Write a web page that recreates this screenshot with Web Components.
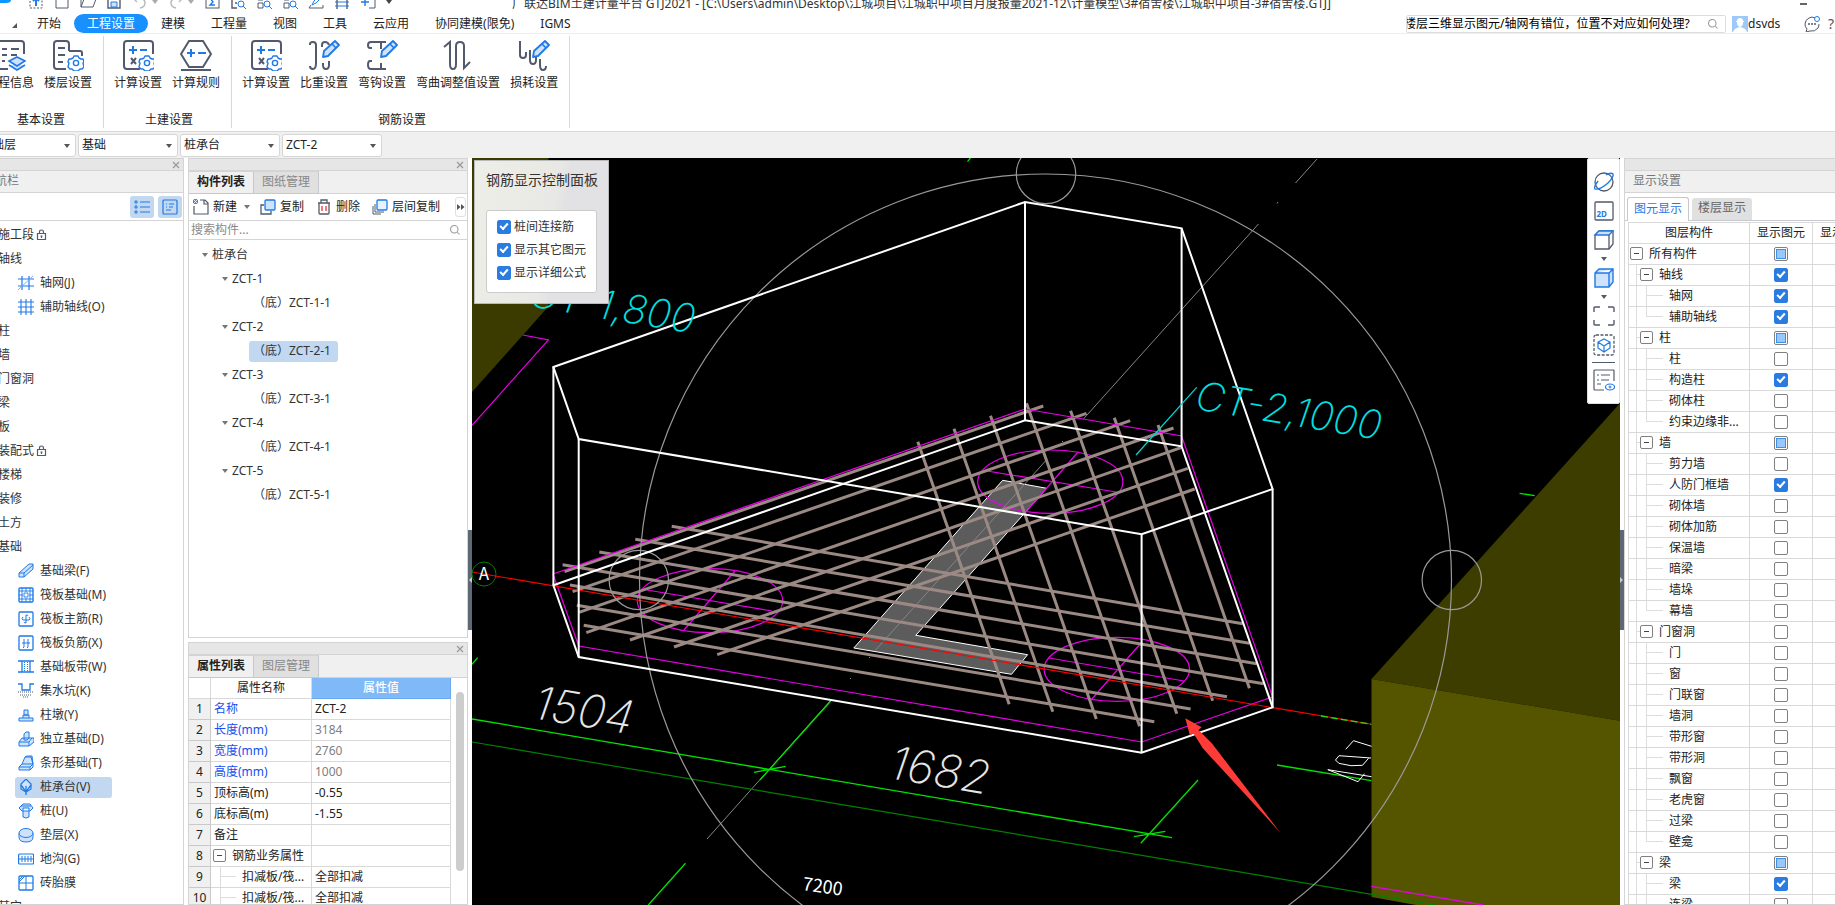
<!DOCTYPE html>
<html lang="zh-CN">
<head>
<meta charset="utf-8">
<title>广联达BIM土建计量平台 GTJ2021</title>
<style>
html,body{margin:0;height:100%}
body{font:12px/20px "Noto Sans","Noto Sans CJK SC",sans-serif;color:#222;background:#fff;overflow:hidden}
</style>
</head>
<body>
<gtj-app></gtj-app>
<script>
const K='stroke="#535a6b" fill="none"', B='stroke="#1f7ae6" fill="none"', L='stroke="#1f7ae6" fill="#cfe2fb"';
const gear=(x,y)=>`<g ${B} stroke-width="2"><path d="M${x-2} ${y-7}h4l1 2 2 1 2 0 1 3-1 1 1 4-2 2-2 0-2 2h-4l-2-2-2 0-2-2 1-4-1-1 1-3 2 0 2-1z" stroke-linejoin="round" stroke-width="1.4"/><circle cx="${x}" cy="${y}" r="2.6" stroke-width="1.4"/></g>`;
const pencil=`<path d="M15 18l1-6L27 2l4 4-11 11z" ${L} stroke-width="1.8" stroke-linejoin="round"/><path d="M24 5l4 4" ${B} stroke-width="1.6"/>`;
const ICONS={
 info:[32,`<g ${K} stroke-width="2"><path d="M6 2h21q3 0 3 3v10M4 30h10M8 10h5M8 16h5M8 22h3M17 10h8M17 16h6"/></g><path d="M23 18l8 4-8 5-8-5zM15 26l8 5 8-5" ${L} stroke-width="1.6"/>`],
 floor:[32,`<g ${K} stroke-width="2"><path d="M17 12V5q0-3-3-3H5Q2 2 2 5v22q0 3 3 3h9M6 9h7M6 16h7M6 23h5M17 12h11q2 0 2 2v3"/></g>${gear(24,24)}`],
 calc:[32,`<g ${K} stroke-width="2"><path d="M31 15V5q0-3-3-3H5Q2 2 2 5v22q0 3 3 3h13M9 19l5 6M14 19l-5 6"/></g><path d="M7 11h8M11 7v8M18 11h7" ${B} stroke-width="2"/>${gear(25,24)}`],
 rule:[32,`<g ${K} stroke-width="2"><path d="M9 2h14l8 13-8 13H9L1 15zM1 31h30"/></g><path d="M7 14h8M11 10v8M18 14h8" ${B} stroke-width="2"/>`],
 weight:[32,`<g ${K} stroke-width="2"><path d="M2 6V5q0-2 3-2t3 3v18q0 6-3 6t-3-3M14 8V6q0-3 3-3t4 3M15 24v2q0 4 3 4t3-4v-4"/></g>${pencil}`],
 hook:[32,`<g ${K} stroke-width="2"><path d="M6 9H4Q2 9 2 6t3-3h15M15 3v7M6 22H4q-2 0-2 4t3 4h15M15 24v6M9 3h4"/></g>${pencil}`],
 bend:[32,`<g ${K} stroke-width="2"><path d="M2 8l6-5v22q0 5 3 5t3-5V7q0-4 4-4t4 4v22l6-6"/></g>`],
 loss:[32,`<g ${K} stroke-width="2"><path d="M2 2v14q0 3 3 3t3-3v-3M12 11v10q0 4 3 4t3-4v-3M22 20v6q0 5 3 5t3-4"/></g>${pencil}`],
 t0:[16,`<rect x="2" y="1" width="12" height="13" ${K} stroke-dasharray="2 1.5"/><path d="M8 12V5M5 7l3-3 3 3" ${B} stroke-width="2"/>`],
 t1:[16,`<path d="M2 1h9l3 3v10H2z" ${K}/>`],
 t2:[16,`<path d="M1 13V2h12v3M1 13L4 5h12l-3 8z" ${K}/>`],
 t3:[16,`<path d="M2 1h12v13H2z" ${K} stroke-width="1.4"/><path d="M5 8h6v5H5z" ${L}/>`],
 t4:[16,`<path d="M2 5l3-3M2 5l3 3M2 5h7q4 0 4 4t-5 5" stroke="#b5b8be" fill="none" stroke-width="1.4"/>`],
 t5:[16,`<path d="M14 5l-3-3M14 5l-3 3M14 5H7Q3 5 3 9t5 5" stroke="#b5b8be" fill="none" stroke-width="1.4"/>`],
 t6:[16,`<rect x="2" y="1" width="13" height="13" ${K}/><path d="M11 4H6l3 4-3 3h5" ${B} stroke-width="1.4"/>`],
 t7:[16,`<path d="M14 5V1H2v13h5M5 5h3M5 9h2" ${K} stroke-width="1.4"/><circle cx="11" cy="10" r="3" ${B}/><path d="M13 12l3 3" ${B}/>`],
 t8:[16,`<path d="M2 1h5v5H2zM2 9h5v5H2zM10 1h5v4" ${K}/><circle cx="11" cy="10" r="3" ${B}/><path d="M13 12l3 3" ${B}/>`],
 t9:[16,`<path d="M4 11l2-4 6-6 2 2-6 6z" ${B}/><path d="M1 14h14v-3M1 14l2-3" ${K}/>`],
 t10:[16,`<path d="M3 1v14M13 1v14" ${K} stroke-width="1.4"/><path d="M1 4h14M1 8h14M1 12h14" ${B}/>`],
 t11:[16,`<path d="M9 2h6v12H9" ${K}/><path d="M1 8h8M5 4v8" ${B} stroke-width="1.4"/>`],
 search:[16,`<circle cx="7" cy="7" r="5" stroke="#999" fill="none" stroke-width="1.4"/><path d="M11 11l3 3" stroke="#999" stroke-width="1.4"/>`],
 avatar:[16,`<path d="M0 0h16v16H0z" fill="#9cc9f7"/><path d="M5 5q0-3 3-3t3 3v2q0 3-3 4-3-1-3-4zM1 16q1-4 7-5 6 1 7 5zM4 5h8v1H4z" fill="#fff"/>`],
 chat:[16,`<path d="M11 2Q8 0 5 2 1 4 1 8q0 3 2 5l-1 3 4-1q5 1 8-3 1-2 1-4" ${K}/><circle cx="13" cy="3" r="2.5" ${B}/><path d="M4 8h2M7 8h2M10 8h2" ${K} stroke-width="1.6"/>`],
 list:[16,`<path d="M6 3h10M6 8h10M6 13h10" ${B} stroke-width="1.2"/><path d="M1 2h2v2H1zM1 7h2v2H1zM1 12h2v2H1z" ${B}/>`],
 card:[16,`<rect x="1" y="1" width="14" height="14" rx="1" ${B} stroke-width="1.2"/><path d="M4 5h1M7 5h5M4 8h1M7 8h4M4 11h5" ${B}/>`],
 lock:[12,`<path d="M1.500 4.500h8v6h-8zM3.500 4.500V3q0-2 2-2t2 2v1.500M5.500 6.500v2.500M4.500 7h2" ${K} stroke-width="1.200"/>`],
 grid1:[16,`<path d="M0 4h16M0 11h16M4 1v14M11 1v14" ${B} stroke-width="1.2"/><path d="M0 15L15 1" stroke="#7aaef0"/>`],
 grid2:[16,`<path d="M0 3h16M0 8h16M0 13h16M3 0v16M8 0v16M13 0v16" ${B} stroke-width="1.1"/>`],
 beam:[16,`<path d="M1 10L11 1h4v5L6 14H1zM1 10h5v4M6 10l9-8" ${L}/>`],
 raft:[16,`<rect x="1" y="1" width="14" height="14" rx="1" ${B} stroke-width="1.4"/><path d="M1 4h14M1 8h4M11 8h4M1 12h14M4 1v14M8 1v4M8 11v4M12 1v14M6 6h4v4H6z" ${B} stroke-width=".9"/>`],
 main:[16,`<rect x="1" y="1" width="14" height="14" rx="1" ${B} stroke-width="1.3"/><path d="M5 6q-2 2 0 3h6q2-1 0-3M8 4v8M8 4q2 0 2 1M8 12q-2 0-2-1" ${B}/>`],
 neg:[16,`<rect x="1" y="1" width="14" height="14" rx="1" ${B} stroke-width="1.3"/><path d="M4 8h8M6 4v8l-1 1M10 4v8l-1 1" ${B}/>`],
 strip:[16,`<path d="M0 2h16M0 13h16M4 2v11M12 2v11" ${B} stroke-width="1.3"/><path d="M6.500 3v10M9.500 3v10" ${B} stroke-dasharray="1 1"/>`],
 sump:[16,`<path d="M0 1h4v6h8V1h4" ${B} stroke-width="1.3"/><path d="M0 9h16M2 12h12M5 14h6" ${K} stroke-dasharray="1 1"/>`],
 pier:[16,`<path d="M1 11h14v3H1zM5 11V8h6v3M6 8V3h4v5z" ${L}/>`],
 iso:[16,`<path d="M1 11h10v4H1zM1 11l3-4h10l-3 4M14 7l2 0v4l-5 4M6 8V3l2-2h3v6l-2 2H6z" ${L}/>`],
 bar:[16,`<path d="M1 12h11v3H1zM1 12l3-3h11l-3 3M15 9v3l-3 3M4 9l3-7h6l2 7M7 2l2-1h5l1 8" ${L}/>`],
 cap:[16,`<path d="M8 0l5 5v5l-5 3-5-3V5z" ${L} stroke-width="1.200"/><path d="M3 6l5 7 5-7M8 7v9" ${B} stroke-width="1.300"/>`],
 pile:[16,`<path d="M1 5l4-4h7l3 4-3 3H4zM5 5v9l3 1 3-1V5zM3 3h10" ${L}/>`],
 pad:[16,`<path d="M1 6v4q0 5 7 5t7-5V6" ${L}/><ellipse cx="8" cy="6" rx="7" ry="4.500" ${L}/>`],
 trench:[16,`<rect x="0.600" y="3" width="15" height="10" rx="1" ${B} stroke-width="1.2"/><path d="M1 8h15M4 5v6M7 5v6M10 5v6M13 5v6" ${B}/>`],
 brick:[16,`<rect x="1" y="1" width="14" height="14" rx="1" ${B} stroke-width="1.3"/><path d="M8 1v14M1 8h14M1 7l6-6M1 5l4-4" ${B}/>`],
 add:[16,`<path d="M7 1h5l3 3v11H1V7M11 1v4h4" ${K} stroke-width="1.2"/><path d="M0 0h5v5H0z" fill="#3d8bea"/><path d="M0 0l5 5M5 0L0 5" stroke="#fff" stroke-width=".8"/>`],
 copy:[16,`<path d="M4 6H1v9h10v-3" ${K} stroke-width="1.3"/><rect x="5" y="1" width="10" height="10" rx="1" ${L} stroke-width="1.3"/>`],
 del:[16,`<path d="M2 4h12M3 4v10q0 1 1 1h8q1 0 1-1V4M5 4V1h6v3" ${K} stroke-width="1.3"/><path d="M6 7v5M10 7v5" stroke="#e33" stroke-width="1.3"/>`],
 copies:[16,`<path d="M1 7v8h8M3 5v8h9" ${K}/><rect x="5" y="1" width="10" height="10" rx="1" fill="#e8f1fd" stroke="#1f7ae6" stroke-width="1.300"/>`],
 orbit:[22,`<circle cx="11" cy="11" r="9" ${K} stroke-width="1.300"/><path d="M5 10Q0 17 2 18q5 1 13-6 6-6 5-9-2-2-7 1" ${B} stroke-width="1.400"/>`],
 two:[22,`<rect x="2" y="2" width="18" height="18" rx="1" ${K} stroke-width="1.300"/>`],
 box:[22,`<path d="M2 6l4-4h14v13l-4 5H2z" ${K} stroke-width="1.300"/><path d="M2 6l4-4h14l-4 4z" ${L} stroke-width="1.300"/><path d="M16 6v14" ${K} stroke-width="1.300"/>`],
 boxf:[22,`<path d="M2 6l4-4h14v13l-4 5H2zM2 6h14l4-4M16 6v14" ${L} stroke-width="1.400"/>`],
 fit:[22,`<path d="M1 7V3q0-1 1-1h5M15 2h5q1 0 1 1v4M21 15v4q0 1-1 1h-5M7 20H2q-1 0-1-1v-4" ${K} stroke-width="1.400"/>`],
 sel:[22,`<rect x="1" y="1" width="20" height="20" rx="2" ${K} stroke-width="1.300" stroke-dasharray="3 1.500"/><path d="M11 5l6 3v6l-6 4-6-4V8zM5 8l6 4 6-4M11 12v6" ${B} stroke-width="1.200"/>`],
 look:[22,`<path d="M21 12V2q0-1-1-1H2Q1 1 1 2v18q0 1 1 1h9M4 6h2M8 6h9M4 11h2M8 11h8M4 15h4" ${K} stroke-width="1.200"/><ellipse cx="17" cy="18" rx="4.500" ry="3" ${B} stroke-width="1.200"/><circle cx="17" cy="18" r="1" ${B}/>`]
};
function define(name,render,after){
  customElements.define(name,class extends HTMLElement{
    connectedCallback(){
      if(this.shadowRoot)return;
      const t=document.createElement('template');
      t.innerHTML=render(this);
      this.attachShadow({mode:'open'}).append(t.content.cloneNode(true));
      if(after)after(this.shadowRoot,this);
    }
  });
}
const A=(e,n,d='')=>e.getAttribute(n)??d;

define('ui-icon',e=>{const [v,s]=ICONS[A(e,'name')],z=A(e,'size',v);
  return `<style>:host{display:block;flex:none;width:${z}px;height:${z}px}svg{display:block}</style><svg width="${z}" height="${z}" viewBox="0 0 ${v} ${v}" aria-hidden="true">${s}</svg>`});
define('ui-caret',()=>`<style>:host{display:block;flex:none;width:0;height:0;border:3px solid transparent;border-bottom:0;border-top:4px solid var(--c,#777)}</style>`);

const checkCss=`input{appearance:none;box-sizing:border-box;width:14px;height:14px;margin:0;border:1px solid #808080;border-radius:2px;background:#fff;display:block;flex:none}
input:checked{border-color:#2a7ce0;background:linear-gradient(#2a7ce0,#2a7ce0)}
input:checked::before{content:"";display:block;width:6px;height:3px;margin:2px 0 0 2px;border:solid #fff;border-width:0 0 2px 2px;transform:rotate(-48deg)}
input:indeterminate::before{content:"";display:block;width:8px;height:8px;margin:1px;border:1px solid #3d8fec;background:#9bc8fb}`;
define('check-box',e=>`<style>:host{display:block}label{display:flex;align-items:center;gap:3px;color:#333;white-space:nowrap}${checkCss}</style><label><input type="checkbox" ${e.hasAttribute('checked')?'checked':''} aria-label="${A(e,'label','选项')}"><slot></slot></label>`,
  (r,e)=>{if(e.hasAttribute('mixed'))r.querySelector('input').indeterminate=true; if(!e.hasAttribute('label'))r.querySelector('input').removeAttribute('aria-label')});

define('title-bar',()=>`<style>:host{display:flex;height:13px;overflow:hidden;align-items:flex-end;position:relative}
.logo{flex:none;width:28px;height:13px}.tools{display:flex;gap:10px;height:16px;align-items:center;margin-bottom:3px}
button{border:0;background:none;padding:0;display:block}.pair{display:flex;align-items:center;gap:4px}
h1{font-size:12px;font-weight:400;line-height:18px;margin:0 0 0 120px;white-space:nowrap;flex:none;color:#333}
.min{margin-left:auto;margin-right:28px;width:7px;height:2px;background:#666;margin-bottom:8px;flex:none}</style>
<svg class="logo" viewBox="0 0 28 13" aria-hidden="true"><path d="M0 0h11q0 3-5 3H0z" fill="#0a97ff"/></svg>
<div class="tools">${[0,1,2,3].map(i=>`<button aria-label="工具${i}"><ui-icon name="t${i}"></ui-icon></button>`).join('')}
<span class="pair"><button aria-label="撤销"><ui-icon name="t4"></ui-icon></button><ui-caret style="--c:#aaa"></ui-caret></span><span class="pair"><button aria-label="恢复"><ui-icon name="t5"></ui-icon></button><ui-caret style="--c:#aaa"></ui-caret></span>
${[6,7,8,8,9,10,11].map(i=>`<button aria-label="工具${i}"><ui-icon name="t${i}"></ui-icon></button>`).join('')}<ui-caret style="--c:#444"></ui-caret></div>
<h1>广联达BIM土建计量平台 GTJ2021 - [C:\\Users\\admin\\Desktop\\江城项目\\江城职中项目月度报量2021-12\\计量模型\\3#宿舍楼\\江城职中项目-3#宿舍楼.GTJ]</h1><span class="min"></span>`);

define('menu-bar',()=>`<style>:host{display:flex;height:19px;align-items:center;border-bottom:1px solid #eee;white-space:nowrap;padding-bottom:0}
.corner{width:0;height:0;border:solid transparent;border-width:0 0 5px 5px;border-bottom-color:#555;margin:4px 7px 0 12px;flex:none}
nav{display:flex}button{font:inherit;border:0;background:none;padding:0 13px;height:19px;line-height:19px;color:#222;border-radius:10px}
button.on{background:#1890ff;color:#fff}
.find{display:flex;align-items:center;box-sizing:border-box;width:320px;height:18px;border:1px solid #ddd;border-radius:2px;margin-left:auto;padding-right:6px}
input{flex:1;min-width:0;border:0;padding:0;font:inherit;line-height:16px;height:16px;outline:0;color:#000;text-indent:-3px;background:none}
.user{display:flex;align-items:center;margin:0 20px 0 6px;width:52px}.q{margin-left:8px;width:8px;font-size:14px;color:#555}.q{width:7px}</style>
<span class="corner"></span><nav>${['开始','工程设置','建模','工程量','视图','工具','云应用','协同建模(限免)','IGMS'].map((t,i)=>`<button${i==1?' class="on"':''}>${t}</button>`).join('')}</nav>
<label class="find"><input aria-label="搜索问题" value="楼层三维显示图元/轴网有错位，位置不对应如何处理?"><ui-icon name="search" size="12"></ui-icon></label>
<span class="user"><ui-icon name="avatar"></ui-icon>dsvds</span><ui-icon name="chat"></ui-icon><span class="q">?</span>`);

define('ribbon-button',e=>`<style>:host{display:block}button{font:inherit;line-height:20px;color:#222;border:0;background:none;padding:0 5px;display:flex;flex-direction:column;align-items:center;gap:2px;white-space:nowrap}</style><button><ui-icon name="${A(e,'icon')}"></ui-icon><slot></slot></button>`);
define('ribbon-group',e=>`<style>:host{display:flex;flex-direction:column;justify-content:space-between;height:92px;box-sizing:border-box;border-right:1px solid #d8d8d8;padding:3px 6px 0 5px}
.row{display:flex}.cap{text-align:center;line-height:20px;margin-bottom:-2px;padding-left:4px}</style><div class="row"><slot></slot></div><div class="cap">${A(e,'caption')}</div>`);
define('ribbon-bar',()=>`<style>:host{display:flex;height:98px;box-sizing:border-box;padding-top:2px;border-bottom:1px solid #d9d9d9;margin-left:-24px}</style>
<ribbon-group caption="基本设置"><ribbon-button icon="info">工程信息</ribbon-button><ribbon-button icon="floor">楼层设置</ribbon-button></ribbon-group>
<ribbon-group caption="土建设置"><ribbon-button icon="calc">计算设置</ribbon-button><ribbon-button icon="rule">计算规则</ribbon-button></ribbon-group>
<ribbon-group caption="钢筋设置"><ribbon-button icon="calc">计算设置</ribbon-button><ribbon-button icon="weight">比重设置</ribbon-button><ribbon-button icon="hook">弯钩设置</ribbon-button><ribbon-button icon="bend">弯曲调整值设置</ribbon-button><ribbon-button icon="loss">损耗设置</ribbon-button></ribbon-group>`);

define('combo-box',e=>`<style>:host{display:flex;align-items:center;box-sizing:border-box;width:100px;height:23px;background:#fff;border:1px solid #d6d6d6;border-radius:3px;padding-right:5px}
select{appearance:none;flex:1;border:0;background:none;font:inherit;line-height:19px;color:#222;padding:0 0 2px 3px;outline:0;height:21px}</style><select aria-label="${A(e,'label')}"><option>${A(e,'value')}</option></select><ui-caret style="--c:#555"></ui-caret>`);
define('combo-strip',()=>`<style>:host{display:flex;gap:2px;height:26px;box-sizing:border-box;padding-top:2px;background:#f0f0f0}combo-box:first-of-type{margin-left:-24px}</style>
<combo-box label="楼层" value="基础层"></combo-box><combo-box label="类别" value="基础"></combo-box><combo-box label="构件类型" value="桩承台"></combo-box><combo-box label="构件" value="ZCT-2"></combo-box>`);

define('dock-panel',e=>`<style>:host{display:flex;flex-direction:column;box-sizing:border-box;border:1px solid #d4d4d4;min-height:0;overflow:hidden;background:#fff}
.grip{flex:none;height:11px;background:#e6e6e6;border-bottom:1px solid #d4d4d4;display:flex;justify-content:flex-end}button{border:0;background:none;padding:0 3px 0 0;height:11px;display:flex;align-items:center}
.title{flex:none;height:21px;line-height:20px;background:#f0f0f0;border-bottom:1px solid #d4d4d4;color:#777;padding-left:8px;box-sizing:border-box;height:22px}</style>
<div class="grip">${e.hasAttribute('fixed')?'':`<button aria-label="关闭"><svg width="8" height="8" viewBox="0 0 8 8"><path d="M1 1l6 6M7 1L1 7" stroke="#999" stroke-width="1.200"/></svg></button>`}</div>
${A(e,'caption')?`<div class="title"><slot name="title"></slot></div>`:''}<slot></slot>`);

define('nav-item',e=>{const ic=A(e,'icon');return `<style>:host{display:flex;align-items:center;height:24px;white-space:nowrap;color:#333}
a{display:flex;align-items:center;color:inherit;text-decoration:none;height:21px;border-radius:3px;${ic?'margin-left:15px;padding-left:3px;gap:6px;box-sizing:border-box;flex:none;width:97px':'margin-left:-2px;gap:2px'}}
a.on{background:#c1d8f0}</style><a href="#" ${e.hasAttribute('on')?'class="on"':''}>${ic?`<ui-icon name="${ic}"></ui-icon>`:''}<slot></slot>${e.hasAttribute('lock')?'<ui-icon name="lock"></ui-icon>':''}</a>`});
const NAV=[['施工段','','lock'],['轴线'],['轴网(J)','grid1'],['辅助轴线(O)','grid2'],['柱'],['墙'],['门窗洞'],['梁'],['板'],['装配式','','lock'],['楼梯'],['装修'],['土方'],['基础'],['基础梁(F)','beam'],['筏板基础(M)','raft'],['筏板主筋(R)','main'],['筏板负筋(X)','neg'],['基础板带(W)','strip'],['集水坑(K)','sump'],['柱墩(Y)','pier'],['独立基础(D)','iso'],['条形基础(T)','bar'],['桩承台(V)','cap','on'],['桩(U)','pile'],['垫层(X)','pad'],['地沟(G)','trench'],['砖胎膜','brick'],['其它']];
define('nav-panel',()=>`<style>:host{display:flex;width:184px;flex:none}dock-panel{flex:1;border-left:0}.t{margin-left:-25px}
.tools{flex:none;display:flex;justify-content:flex-end;align-items:center;gap:4px;height:27px;border-bottom:1px solid #d4d4d4;padding-right:1px}
button{width:24px;height:22px;border:0;border-radius:3px;background:#c1d8f0;padding:0;display:flex;align-items:center;justify-content:center}.list{padding-top:2px}</style>
<dock-panel caption="y"><span class="t" slot="title">导航栏</span><div class="tools"><button aria-label="列表"><ui-icon name="list"></ui-icon></button><button aria-label="卡片"><ui-icon name="card"></ui-icon></button></div>
<div class="list">${NAV.map(([t,i,f])=>`<nav-item ${i?`icon="${i}"`:''} ${f||''}>${t}</nav-item>`).join('')}</div></dock-panel>`);

define('panel-tabs',e=>`<style>:host{display:flex;flex:none;height:23px;background:#f0f0f0;box-sizing:border-box;border-bottom:1px solid #d4d4d4}
button{font:inherit;line-height:18px;height:23px;width:65px;padding:0 0 2px;border:1px solid #c6c8ce;border-left:0;border-top-color:#d4d4d4;background:#e0e0e0;color:#888}button.on{background:#f0f0f0;color:#222;font-weight:700}</style>
${A(e,'items').split(',').map((t,i)=>`<button${i?'':' class="on"'}>${t}</button>`).join('')}`);

define('tree-item',e=>{const l=+A(e,'level');return `<style>:host{display:flex;align-items:center;height:24px;padding-left:${[13,33,60][l]}px;white-space:nowrap;color:#333}ui-caret{margin-right:4px}
span{height:21px;line-height:20px;border-radius:3px;${l==2?'padding:0 7px 0 4px':''}}span.on{background:#c1d8f0}</style>${l<2?'<ui-caret></ui-caret>':''}<span ${e.hasAttribute('on')?'class="on"':''}><slot></slot></span>`});
define('component-panel',()=>`<style>:host{display:flex;height:480px;flex:none}dock-panel{flex:1}
.tools{flex:none;height:27px;box-sizing:border-box;border-bottom:1px solid #d4d4d4;display:flex;align-items:center;padding-left:4px}
button{font:inherit;color:#222;border:0;background:none;padding:0;display:flex;align-items:center;gap:4px;white-space:nowrap}ui-caret{margin:0 10px 0 7px}.n{margin-right:12px}.more{margin-left:auto;margin-right:1px;width:11px;height:20px;border:1px solid #e0e0e0;border-radius:3px;justify-content:center}
label{flex:none;display:flex;align-items:center;height:18px;border-bottom:1px solid #d4d4d4;padding:0 6px 0 2px}input{flex:1;border:0;padding:0;font:inherit;line-height:18px;height:18px;outline:0}input::placeholder{color:#8a8a8a}.tree{padding-top:3px}</style>
<dock-panel><panel-tabs items="构件列表,图纸管理"></panel-tabs>
<div class="tools"><button><ui-icon name="add"></ui-icon>新建</button><ui-caret></ui-caret><button class="n"><ui-icon name="copy"></ui-icon>复制</button><button class="n"><ui-icon name="del"></ui-icon>删除</button><button><ui-icon name="copies"></ui-icon>层间复制</button>
<button class="more" aria-label="更多"><svg width="8" height="6" viewBox="0 0 8 6" style="flex:none"><path d="M0 0l3.500 3L0 6zM4 0l3.500 3L4 6z" fill="#555"/></svg></button></div>
<label><input placeholder="搜索构件..." aria-label="搜索构件"><ui-icon name="search" size="12"></ui-icon></label>
<div class="tree"><tree-item level="0">桩承台</tree-item>${[1,2,3,4,5].map(n=>`<tree-item level="1">ZCT-${n}</tree-item><tree-item level="2" ${n==2?'on':''}>（底）ZCT-${n}-1</tree-item>`).join('')}</div></dock-panel>`);

const minus=`<svg class="m" width="13" height="13" viewBox="0 0 13 13"><rect x=".5" y=".5" width="12" height="12" rx="1.500" fill="#fff" stroke="#808080"/><path d="M4 6.500h5" stroke="#444"/></svg>`;
const PROPS=[['名称','ZCT-2','b'],['长度(mm)','3184','b g'],['宽度(mm)','2760','b g'],['高度(mm)','1000','b g'],['顶标高(m)','-0.55',''],['底标高(m)','-1.55',''],['备注','',''],['钢筋业务属性','','h'],['扣减板/筏...','全部扣减','s'],['扣减板/筏...','全部扣减','s']];
define('property-panel',()=>`<style>:host{display:flex;flex:1;min-height:0}dock-panel{flex:1}.body{display:flex;align-items:flex-start}
table{border-collapse:separate;border-spacing:0;table-layout:fixed;width:262px;flex:none}th,td{box-sizing:border-box;height:21px;padding:0 0 0 3px;line-height:20px;font-weight:400;text-align:left;border:solid #d9d9d9;border-width:0 1px 1px 0;white-space:nowrap;overflow:hidden}
thead th{text-align:center;padding:0}thead th:last-child{background:#80b9f8;border-color:#6aa9ee;color:#fff;font-weight:500}
tbody th{background:#f0f0f0;text-align:center;padding:0;border-color:#c9c9c9}.b td:nth-child(2){color:#1450f0}.g td:nth-child(3){color:#808080}
.m{vertical-align:-2px;margin:0 6px 0 0}.h td:nth-child(2){padding-left:2px}.s td:nth-child(2){padding-left:31px;background:linear-gradient(#ddd,#ddd) 9px 9px/16px 1px no-repeat,linear-gradient(#ddd,#ddd) 9px 0/1px 100% no-repeat}
.bar{width:8px;height:179px;border-radius:4px;background:#cdcdcd;margin:14px 0 0 5px}</style>
<dock-panel><panel-tabs items="属性列表,图层管理"></panel-tabs><div class="body"><table><colgroup><col style="width:22px"><col style="width:101px"><col></colgroup><thead><tr><th></th><th>属性名称</th><th>属性值</th></tr></thead>
<tbody>${PROPS.map(([a,b,c],i)=>`<tr class="${c}"><th scope="row">${i+1}</th><td>${c=='h'?minus:''}${a}</td><td>${b}</td></tr>`).join('')}</tbody></table><div class="bar"></div></div></dock-panel>`);

define('split-handle',e=>`<style>:host{display:flex;flex:none;width:4px;background:#fff;padding-top:372px}div{width:4px;height:100px;background:#5f6975;display:flex;align-items:center}svg{display:block}</style><div><svg width="4" height="6" viewBox="0 0 4 6"><path d="${e.hasAttribute('right')?'M0 0l3 3-3 3z':'M4 0L1 3l3 3z'}" fill="#ccc"/></svg></div>`);

define('control-card',()=>`<style>:host{display:block;box-sizing:border-box;width:135px;height:144px;padding:9px 11px 0;background:linear-gradient(100deg,#eeeee8,#e8e9e4 55%,#e2e2e4 62%);border:1px solid #b9b9b9;color:#333}
h2{margin:0 0 20px;font-size:14px;font-weight:400;line-height:20px;white-space:nowrap}.b{box-sizing:border-box;width:111px;height:83px;background:#fff;border:1px solid #ccc;border-radius:3px;padding:6px 0 0 10px;display:flex;flex-direction:column;gap:3px}</style>
<h2>钢筋显示控制面板</h2><div class="b"><check-box checked>桩间连接筋</check-box><check-box checked>显示其它图元</check-box><check-box checked>显示详细公式</check-box></div>`);
define('view-tools',()=>`<style>:host{display:flex;flex-direction:column;align-items:center;box-sizing:border-box;width:33px;height:246px;background:#fff;border:1px solid #ddd;border-radius:2px;padding-top:12px}
button{border:0;background:none;padding:0;display:grid;margin-bottom:7px}button>*{grid-area:1/1}.d{align-self:end;color:#1f7ae6;font:700 8px/10px "Noto Sans",sans-serif;text-align:left;padding:0 0 3px 4px}
.k{margin-bottom:6px}ui-caret{margin-bottom:6px;--c:#535a6b}hr{width:23px;border:0;height:1px;background:#535a6b;margin:-1px 0 6px}</style>
<button aria-label="动态观察"><ui-icon name="orbit"></ui-icon></button><button aria-label="二维"><ui-icon name="two"></ui-icon><span class="d">2D</span></button><button class="k" aria-label="线框"><ui-icon name="box"></ui-icon></button><ui-caret></ui-caret><button class="k" aria-label="实体"><ui-icon name="boxf"></ui-icon></button><ui-caret></ui-caret><button aria-label="全屏"><ui-icon name="fit"></ui-icon></button><button aria-label="选择"><ui-icon name="sel"></ui-icon></button><hr><button aria-label="显示设置"><ui-icon name="look"></ui-icon></button>`);

const seg=a=>a.map(([x1,y1,x2,y2])=>`M${x1} ${y1}L${x2} ${y2}`).join('');
const BARS=seg([[564.5,571.7,1043.3,406],[572.6,591.7,1086.5,413.3],[579,612.3,1130.2,420.7],[586.3,632.7,1173.5,428],[630,640,1181,447.7],[674,647,1187.8,468.3],[717.2,654.7,1194.7,489],
[671.7,526.3,1242.9,623.7],[635.3,539.3,1249.4,643.3],[599.3,552,1256.8,663.7],[562.6,564.7,1263.7,683.7],[569.9,585,1227,696.7],[576.8,605.3,1190.6,709],[583.7,625.3,1154.3,721.7],
[917.8,441.7,1009.2,704.3],[954,428.7,1052.8,711.7],[990.5,415.7,1096.3,719],[1026.5,403.3,1139.6,726.3],[1070.6,410.7,1176.8,713.7],[1114.3,417.7,1212.7,700.7],[1158,425,1249.4,688.3]]);
define('model-view',()=>`<style>:host{display:block;flex:1;min-width:0;position:relative;background:#000;overflow:hidden}svg{display:block;width:100%;height:100%}
control-card{position:absolute;left:2px;top:2px}view-tools{position:absolute;right:0;top:0}
.cad{font-family:Inter,sans-serif;font-weight:200;font-style:italic}</style>
<svg viewBox="472 158 1148 747" preserveAspectRatio="xMinYMin slice" fill="none" role="img" aria-label="三维模型">
<path d="M472 158h76.400v148.500L472 392z" fill="#3b3b00"/>
<path d="M522.800 335l25.600 5L472 425.300" stroke="#e800e8" stroke-width="1.200"/>
<path d="M1002.700 480.300L1046.700 488.300 915.800 635.300 1027.600 654.700 1011.500 674.300 853.800 648z" fill="#5c5c5c" stroke="#fff"/>
<g stroke="#e800e8" stroke-width="1.200"><ellipse cx="1050.300" cy="481.700" rx="72.600" ry="31.700"/><ellipse cx="710" cy="600.700" rx="72.700" ry="32"/><ellipse cx="1116.800" cy="669.300" rx="72.700" ry="32"/>
<path d="M987 471l129 21M1078 452l-53 61M647 590l125 21M735 571l-51 59M1049 658l135 23M1141 643l-50 57"/></g>
<path d="M1317 159l-21.500 24M1278 202l-1 1.500M1258.500 224L1083.700 418.700M1063 441l-1 1M1045.700 460.700L875.600 650M870 657l-1 1M851 678l-1 1M831 700L707 839" stroke="#858585"/>
<path d="M472 742L1434.700 905" stroke="#008000" stroke-width="1.200"/>
<g stroke="#00e400" stroke-width="1.300"><path d="M472 719L1172 837.700M754 772.300l31.700-6M831 700.700L760 780M1134 836.700l31.300-5.400M1198 780l-57.200 63.300M472 664.300l5.700-6.600M685.500 863.300L648.300 905M1277 765l94.500 15.700M1519.600 493.300l15.100 2.400M970.500 158l-3 3.700"/></g>
<path d="${BARS}" stroke="#9b8983" stroke-width="3"/>
<path d="M553 574L1025 409 1181.600 436 1272.600 697 1141.600 742 578.700 646z" stroke="#e800e8" stroke-width="1.200"/>
<path d="M472 572L1371.500 724.300" stroke="#f00" stroke-width="1.100"/><path d="M1321 716l50.500 8.300" stroke="#1ee000" stroke-width="1.300" stroke-dasharray="7 3"/>
<path d="M1620 403.300L1371.500 679 1620 720.700z" fill="#3d3d00"/><path d="M1371.500 679L1620 720.700V905H1416L1371.500 897z" fill="#555500"/>
<path d="M1371.500 886.300L1483 905" stroke="#e800e8" stroke-width="1.300"/><path d="M1371.500 894.300L1434.700 905" stroke="#008000" stroke-width="1.200"/>
<g stroke="#999" stroke-width="1.200"><circle cx="1045.500" cy="580" r="406"/><circle cx="1046" cy="174" r="29.700"/><circle cx="1451.800" cy="580" r="29.700"/><circle cx="638.800" cy="580" r="29.700"/></g>
<g stroke="#fff" stroke-width="2"><path d="M553.400 367L1025 202 1181.600 228.300 1272.600 489 1141.600 534.300 578.700 439z"/><path d="M553.400 585.300L1025 420.300 1181.600 446.300 1272.600 707.300 1141.600 752.700 578.700 657z"/>
<path d="M553.400 367V585M1025 202V420M1181.600 228V446M1272.600 489V707M1141.600 534V753M578.700 439V657"/></g>
<path d="M1345.700 749.300l7.800-8.600 18 5.600M1371 758l-32-2.300-3.500 4.300 3.300 3.300 12.200 2.400 11.500-.4 6.100-7M1371.500 776.700l-43.700-7 30.200 12 6.500-8" stroke="#fff"/>
<path d="M1196.700 387.300L1136 455" stroke="#00d8d8" stroke-width="1.200"/>
<circle cx="484" cy="574" r="12" stroke="#008000"/>
<g class="cad" font-size="46" fill="#e6e6e6"><text transform="translate(532 718) rotate(9.500)">1504</text><text transform="translate(888 778) rotate(9.500)">1682</text></g>
<g class="cad" font-size="40" fill="#00e0e0"><text transform="translate(1194 409) rotate(9.500)">CT-2,1000</text><text transform="translate(528 306) rotate(9.500)">CT-1,800</text></g>
<text x="484" y="580" text-anchor="middle" font-size="17" fill="#fff" font-family="Noto Sans CJK SC">A</text>
<text transform="translate(802 890) rotate(8)" font-size="18" fill="#fff" font-family="Noto Sans CJK SC">7200</text>
<path d="M1185.300 718.300L1201.600 727.300 1198.500 730 1212 743.500 1280.400 832.700 1203 748.500 1193.500 733.500 1189.800 735z" fill="#ff3b38"/>
</svg><control-card></control-card><view-tools></view-tools>`);

const ROWS=`0m所有构件|1c轴线|2c轴网|3c辅助轴线|1m柱|2u柱|2c构造柱|2u砌体柱|3u约束边缘非...|1m墙|2u剪力墙|2c人防门框墙|2u砌体墙|2u砌体加筋|2u保温墙|2u暗梁|2u墙垛|3u幕墙|1u门窗洞|2u门|2u窗|2u门联窗|2u墙洞|2u带形窗|2u带形洞|2u飘窗|2u老虎窗|2u过梁|3u壁龛|1m梁|2c梁|2u连梁`.split('|');
define('display-panel',()=>`<style>:host{display:flex;flex:none;width:211px;overflow:hidden}dock-panel{flex:1;border-right:0}
.tabs{flex:none;display:flex;align-items:flex-end;gap:3px;height:27px;border-bottom:1px solid #c6c8ce;padding-left:2px}button{font:inherit;line-height:18px;border:0;border-radius:3px 3px 0 0;background:#e0e0e0;color:#666;width:60px;height:22px;padding:0 0 2px}button.on{background:#fff;border:1px solid #c6c8ce;border-bottom:0;color:#1f7ae6;width:62px;height:24px;margin-bottom:-1px}
table{margin:1px 0 0 3px;border-collapse:separate;border-spacing:0;table-layout:fixed;width:254px;border-top:1px solid #d9d9d9;border-left:1px solid #d9d9d9}
th,td{box-sizing:border-box;height:21px;padding:0;line-height:20px;font-weight:400;border:solid #d9d9d9;border-width:0 1px 1px 0;white-space:nowrap;overflow:hidden}th:last-child{text-align:left;padding-left:7px}
td.c check-box{width:14px;margin:0 auto}.m{vertical-align:-2px;margin-right:6px}
.l0{padding-left:1px}.l1{padding-left:11px;background:linear-gradient(#ddd,#ddd) 7px 0/1px 100% no-repeat,linear-gradient(#ddd,#ddd) 7px 9px/4px 1px no-repeat}
.l2,.l3{padding-left:40px;background:linear-gradient(#ddd,#ddd) 7px 0/1px 100% no-repeat,linear-gradient(#ddd,#ddd) 17px 9px/17px 1px no-repeat,linear-gradient(#ddd,#ddd) 17px 0/1px 100% no-repeat}
.l3{background-size:1px 100%,17px 1px,1px 10px}</style>
<dock-panel caption="y" fixed><span slot="title">显示设置</span><div class="tabs"><button class="on">图元显示</button><button>楼层显示</button></div>
<table><colgroup><col style="width:121px"><col style="width:63px"><col></colgroup><thead><tr><th>图层构件</th><th>显示图元</th><th>显示名称</th></tr></thead><tbody>
${ROWS.map(r=>{const l=r[0],s=r[1],t=r.slice(2);return `<tr><td class="l${l}">${l<2?minus:''}${t}</td><td class="c"><check-box label="${t}" ${s=='c'?'checked':s=='m'?'mixed':''}></check-box></td><td></td></tr>`}).join('')}</tbody></table></dock-panel>`);

define('gtj-app',()=>`<style>:host{display:flex;flex-direction:column;height:100vh;overflow:hidden}main{flex:1;display:flex;min-height:0}.mid{display:flex;flex-direction:column;gap:4px;width:280px;flex:none;margin-left:4px}
title-bar,menu-bar,ribbon-bar,combo-strip{flex:none}title-bar{margin-bottom:1px}</style>
<title-bar></title-bar><menu-bar></menu-bar><ribbon-bar></ribbon-bar><combo-strip></combo-strip>
<main><nav-panel></nav-panel><div class="mid"><component-panel></component-panel><property-panel></property-panel></div><split-handle></split-handle><model-view></model-view><split-handle right></split-handle><display-panel></display-panel></main>`);
</script>
</body>
</html>
